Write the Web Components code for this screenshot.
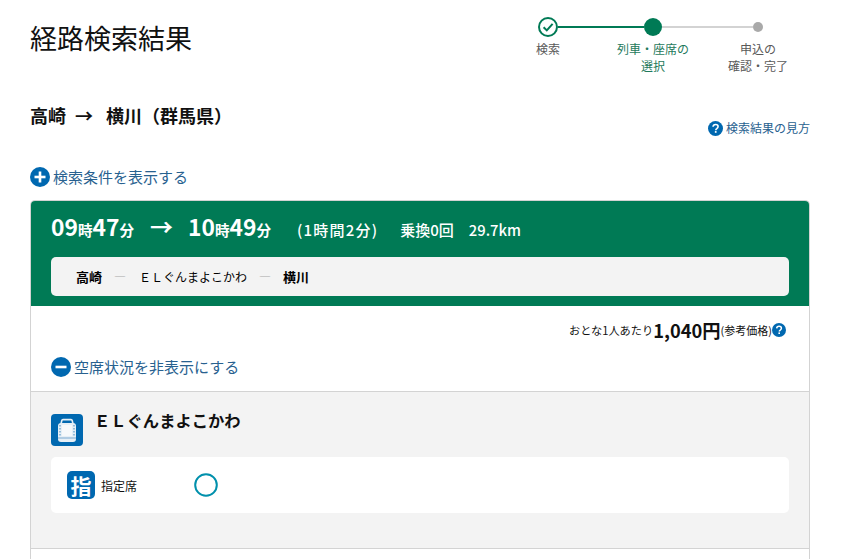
<!DOCTYPE html>
<html lang="ja"><head><meta charset="utf-8"><title>経路検索結果</title>
<style>
html,body{margin:0;padding:0;background:#fff;height:559px;overflow:hidden}
body{font-family:"Noto Sans CJK JP","Noto Sans",sans-serif;color:#000}
</style></head><body>
<route-page></route-page>
<script>
const jp='"Noto Sans CJK JP","Noto Sans",sans-serif';
function def(name,css,html){
  customElements.define(name,class extends HTMLElement{
    constructor(){super();const s=this.attachShadow({mode:'open'});s.innerHTML=`<style>${css}</style>${typeof html==='function'?html(this):html}`;}
  });
}
const q=c=>`<svg width="${c}" height="${c}" viewBox="0 0 14 14" style="display:block;flex:none"><circle cx="7" cy="7" r="7" fill="#0068b0"/><path d="M4.7 5.4C4.8 4.1 5.8 3.3 7.1 3.3c1.3 0 2.3.8 2.3 1.9 0 .9-.5 1.4-1.2 1.9-.6.4-.9.8-.9 1.5" fill="none" stroke="#fff" stroke-width="1.5"/><rect x="6.4" y="9.4" width="1.6" height="1.6" fill="#fff"/></svg>`;

def('step-item',`
:host{display:flex;flex-direction:column;align-items:center;width:105px;font-size:12px;line-height:17px;color:#595959}
:host([current]){color:#1f7a5c}
.row{display:flex;align-items:center;width:100%;height:20px;margin-bottom:3px}
.l{flex:1;height:2px;background:transparent}
.l.g{background:#007a55}.l.c{background:#d3d3d3}
.t{text-align:center;white-space:pre-line}
svg{flex:none;display:block}
`,h=>{
 const k=h.getAttribute('kind');
 let m='';
 if(k==='done')m=`<svg width="20" height="20" viewBox="0 0 20 20"><circle cx="10" cy="10" r="9" fill="#fff" stroke="#007a55" stroke-width="2"/><path d="M5.6 10.2l3.2 3.2 5.8-6.6" fill="none" stroke="#007a55" stroke-width="2"/></svg>`;
 if(k==='cur')m=`<svg width="18" height="18" viewBox="0 0 18 18"><circle cx="9" cy="9" r="9" fill="#007a55"/></svg>`;
 if(k==='todo')m=`<svg width="10" height="10" viewBox="0 0 10 10"><circle cx="5" cy="5" r="5" fill="#a9a9a9"/></svg>`;
 const lc={done:'',cur:'g',todo:'c'}[k], rc={done:'g',cur:'c',todo:''}[k];
 return `<div class="row"><span class="l ${lc}"></span>${m}<span class="l ${rc}"></span></div><div class="t"><slot></slot></div>`;
});

def('step-bar',`:host{display:flex;margin-right:-.5px}`,`<slot></slot>`);

def('page-head',`
:host{display:flex;justify-content:space-between;align-items:flex-start;padding-top:17px;height:69px}
h1{margin:2px 0 0;font-size:27px;font-weight:400;line-height:38px;color:#111}
`,`<h1><slot name="title"></slot></h1><slot name="steps"></slot>`);

def('route-line',`
:host{display:flex;justify-content:space-between;align-items:flex-start;height:81px}
.r{display:flex;align-items:center;font-size:18px;font-weight:700;line-height:26px;white-space:pre;color:#111;margin-top:16px}
.a{margin:0 13px 0 9px}
.h{display:flex;align-items:center;gap:3px;margin-top:33px;font-size:12px;line-height:18px;color:#28618f}
`,`<div class="r"><slot name="from"></slot><span class="a">→</span><slot name="to"></slot></div><div class="h">${q(15)}<slot name="help"></slot></div>`);

def('toggle-link',`
:host{display:flex;align-items:center;gap:3px;font-size:15px;line-height:20px;color:#28618f}
svg{display:block;flex:none}
`,h=>`<svg width="20" height="20" viewBox="0 0 20 20"><circle cx="10" cy="10" r="10" fill="#0068b0"/><rect x="4.5" y="8.7" width="11" height="2.6" fill="#fff"/>${h.hasAttribute('plus')?'<rect x="8.7" y="4.5" width="2.6" height="11" fill="#fff"/>':''}</svg><slot></slot>`);

def('result-card',`
:host{display:block;margin-top:13px;border:1px solid #d3d3d3;border-bottom:0;border-radius:5px 5px 0 0;box-sizing:border-box;width:780px}
`,`<slot></slot>`);

def('result-head',`
:host{display:block;background:#007a55;color:#fff;padding:9px 20px 10px;border-radius:4px 4px 0 0;height:105px;box-sizing:border-box}
.t{display:flex;align-items:baseline;height:32px;font-weight:700;white-space:pre;line-height:32px}
.chain{margin-top:15px;height:39px;background:#f3f3f3;border-radius:5px;color:#000;display:flex;align-items:center;padding-left:25px;font-size:12px}
`,`<div class="t"><slot name="time"></slot></div><div class="chain"><slot name="chain"></slot></div>`);

def('time-val',`
:host{display:inline-flex;align-items:baseline;font-size:22.8px;font-weight:700}
::slotted(small){font-size:14.6px}
`,`<slot></slot>`);

def('chain-row',`
:host{display:flex;align-items:center;font-size:12px;line-height:18px;white-space:pre}
::slotted(b){font-size:13px}
`,`<slot></slot>`);

def('fare-row',`
:host{display:flex;justify-content:flex-end;align-items:center;height:24px;padding:12px 23px 0 0;font-size:11.2px;color:#111;white-space:pre}
.p{font-size:18.3px;font-weight:700}
.n{font-size:11px}
svg{display:block}
`,`<span>おとな1人あたり</span><span class="p">1,040円</span><span class="n">(参考価格)</span>${q(14)}`);

def('train-panel',`
:host{display:block;background:#f3f3f3;border-top:1px solid #d3d3d3;border-bottom:1px solid #d3d3d3;padding:20px 20px 34px;height:158px;box-sizing:border-box}
.h{display:flex;align-items:flex-start;gap:11px;height:45px}
.n{font-size:16.3px;font-weight:700;line-height:22px;margin-top:-3px;color:#111}
svg{display:block;flex:none}
`,`<div class="h"><svg width="32" height="32" viewBox="0 0 32 32" style="margin-top:2px"><rect width="32" height="32" rx="4" fill="#0068b0"/><path d="M10 10L10.800 6.500Q11 5.600 12 5.600H20Q21 5.600 21.200 6.500L22 10" fill="none" stroke="#e6eff6" stroke-width="1.600"/><rect x="7" y="9" width="18" height="19" rx="3" fill="#e6eff6"/><rect x="11" y="11" width="10" height="11" fill="#f6f9fb"/><path d="M9 11v11M23 11v11" stroke="#5f9bc8" stroke-width="1.200" stroke-dasharray="1.600 1.400"/><rect x="7" y="23.500" width="18" height="1" fill="#7aa9cf"/></svg><div class="n"><slot name="name"></slot></div></div><slot></slot>`);

def('seat-row',`
:host{display:flex;align-items:center;background:#fff;border-radius:5px;height:56px;padding-left:16px;font-size:12px;color:#111}
.ic{flex:none;width:28px;height:28px;border-radius:5px;background:#0068b0;color:#fff;font-size:21px;font-weight:700;line-height:28px;text-align:center}
.l{width:99px;padding-left:6px;box-sizing:border-box;flex:none}
svg{display:block}
`,`<span class="ic">指</span><span class="l"><slot></slot></span><svg width="24" height="24" viewBox="0 0 24 24"><circle cx="12" cy="12" r="10.800" fill="#fff" stroke="#0090ac" stroke-width="2"/></svg>`);

def('route-page',`
:host{display:block;width:780px;margin-left:30px;font-family:${jp}}
`,`
<page-head>
  <span slot="title">経路検索結果</span>
  <step-bar slot="steps">
    <step-item kind="done">検索</step-item>
    <step-item kind="cur" current>列車・座席の
選択</step-item>
    <step-item kind="todo">申込の
確認・完了</step-item>
  </step-bar>
</page-head>
<route-line><span slot="from">高崎</span><span slot="to">横川（群馬県）</span><span slot="help">検索結果の見方</span></route-line>
<toggle-link plus>検索条件を表示する</toggle-link>
<result-card>
  <result-head>
    <span slot="time" style="display:contents">
      <time-val>09<small>時</small>47<small>分</small></time-val>
      <span style="font-size:23px;margin:0 15px 0 16px">→</span>
      <time-val>10<small>時</small>49<small>分</small></time-val>
      <span style="font-size:15px;font-weight:500;margin-left:26px;letter-spacing:1.2px">(1時間2分)</span>
      <span style="font-size:15px;font-weight:500;margin-left:22px">乗換0回</span>
      <span style="font-size:14.8px;font-weight:500;margin-left:15px">29.7km</span>
    </span>
    <chain-row slot="chain"><b>高崎</b><span style="color:#aaa;margin:0 13px 0 12px">―</span><span>ＥＬぐんまよこかわ</span><span style="color:#aaa;margin:0 12px">―</span><b>横川</b></chain-row>
  </result-head>
  <fare-row></fare-row>
  <div style="padding:0 20px;height:49px;display:flex;align-items:flex-start"><toggle-link style="margin-top:15px">空席状況を非表示にする</toggle-link></div>
  <train-panel>
    <span slot="name">ＥＬぐんまよこかわ</span>
    <seat-row>指定席</seat-row>
  </train-panel>
  <div style="height:10px;background:#fff"></div>
</result-card>`);
</script>
</body></html>
